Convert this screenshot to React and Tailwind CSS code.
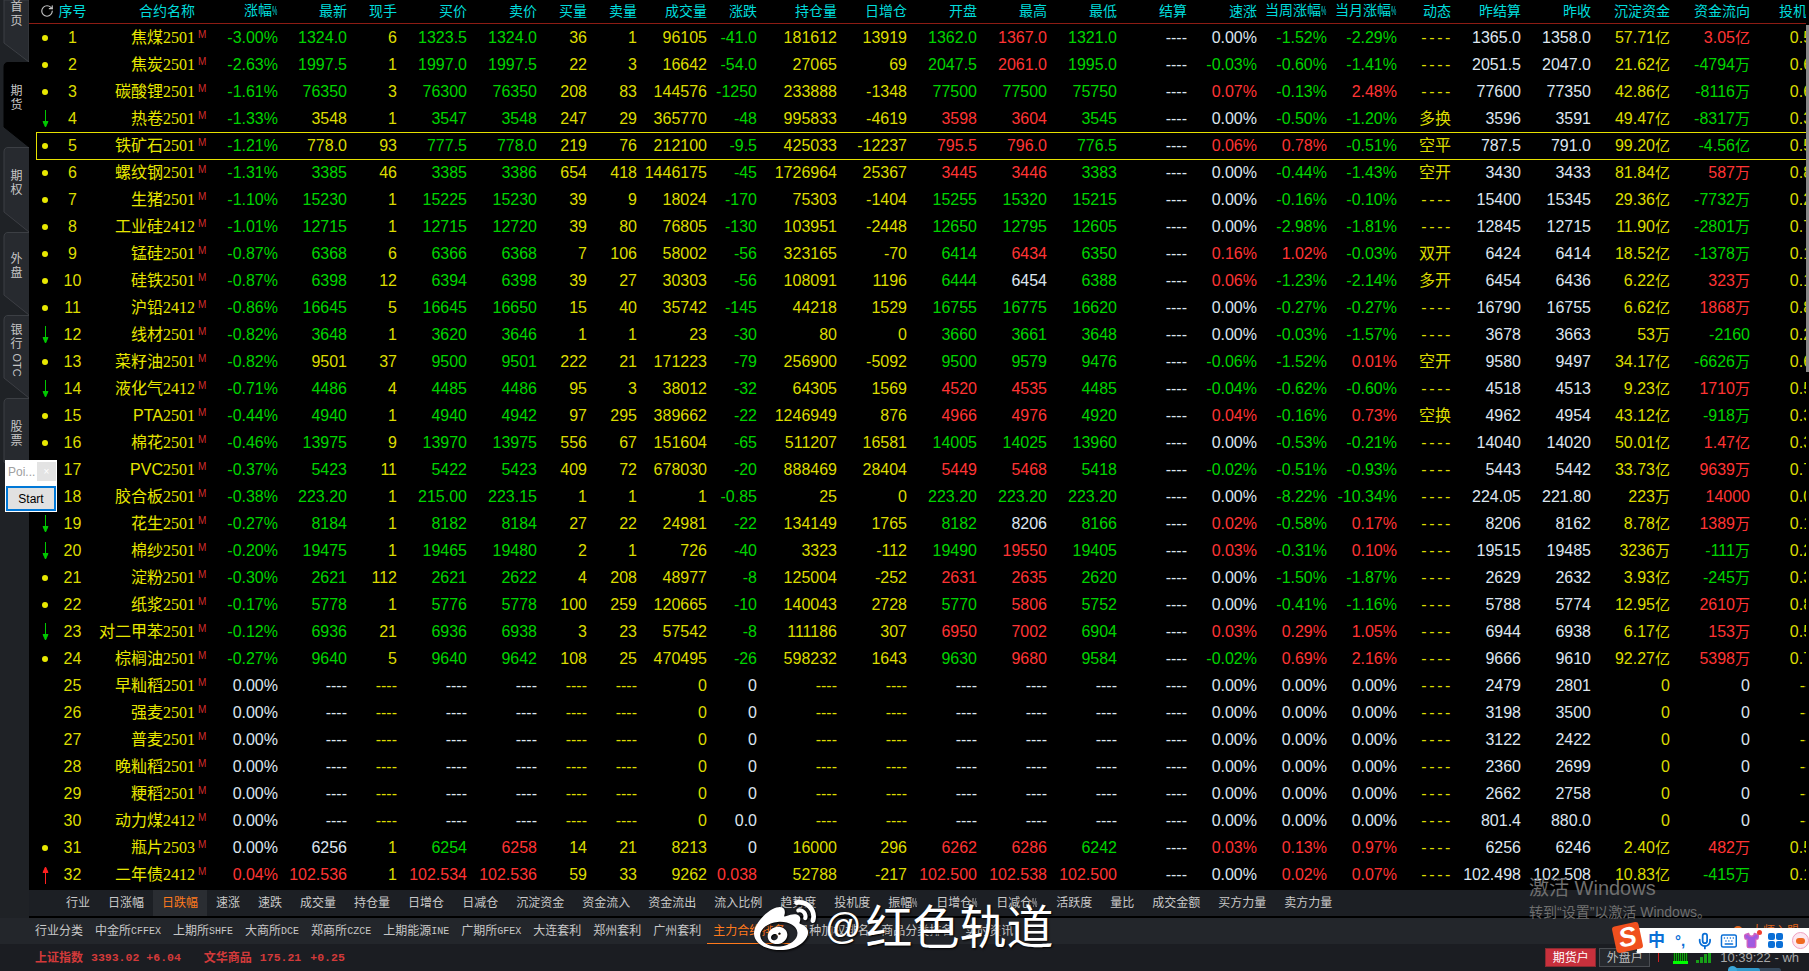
import React from "react";
import { RotateCw, Mic, Keyboard, Shirt } from "lucide-react";
import { FaWeibo } from "react-icons/fa";

// Shared column template, so the header and every row line up
const GRID =
  "grid grid-cols-[29px_29px_120px_71px_69px_50px_70px_70px_50px_50px_70px_50px_80px_70px_70px_70px_70px_70px_70px_70px_70px_54px_70px_70px_79px_80px_71px]";

const HEADERS = [
  "涨幅%", "最新", "现手", "买价", "卖价", "买量", "卖量", "成交量", "涨跌", "持仓量", "日增仓", "开盘", "最高", "最低", "结算",
  "速涨", "当周涨幅%", "当月涨幅%", "动态", "昨结算", "昨收", "沉淀资金", "资金流向", "投机度",
];

const D = "----";

// marker, name, code, pct, last, hand, bid, ask, bidVol, askVol, vol, chg, oi, dayOi, open, high, low, settle,
// speed, week, month, dyn, prevSettle, prevClose, sink, flow, spec
const ROWS = [
  ["dot","焦煤","2501","-3.00%","1324.0","6","1323.5","1324.0","36","1","96105","-41.0","181612","13919","1362.0","1367.0","1321.0",D,"0.00%","-1.52%","-2.29%",D,"1365.0","1358.0","57.71亿","3.05亿","0.53"],
  ["dot","焦炭","2501","-2.63%","1997.5","1","1997.0","1997.5","22","3","16642","-54.0","27065","69","2047.5","2061.0","1995.0",D,"-0.03%","-0.60%","-1.41%",D,"2051.5","2047.0","21.62亿","-4794万","0.63"],
  ["dot","碳酸锂","2501","-1.61%","76350","3","76300","76350","208","83","144576","-1250","233888","-1348","77500","77500","75750",D,"0.07%","-0.13%","2.48%",D,"77600","77350","42.86亿","-8116万","0.63"],
  ["down","热卷","2501","-1.33%","3548","1","3547","3548","247","29","365770","-48","995833","-4619","3598","3604","3545",D,"0.00%","-0.50%","-1.20%","多换","3596","3591","49.47亿","-8317万","0.33"],
  ["dot","铁矿石","2501","-1.21%","778.0","93","777.5","778.0","219","76","212100","-9.5","425033","-12237","795.5","796.0","776.5",D,"0.06%","0.78%","-0.51%","空平","787.5","791.0","99.20亿","-4.56亿","0.53"],
  ["dot","螺纹钢","2501","-1.31%","3385","46","3385","3386","654","418","1446175","-45","1726964","25367","3445","3446","3383",D,"0.00%","-0.44%","-1.43%","空开","3430","3433","81.84亿","587万","0.83"],
  ["dot","生猪","2501","-1.10%","15230","1","15225","15230","39","9","18024","-170","75303","-1404","15255","15320","15215",D,"0.00%","-0.16%","-0.10%",D,"15400","15345","29.36亿","-7732万","0.23"],
  ["dot","工业硅","2412","-1.01%","12715","1","12715","12720","39","80","76805","-130","103951","-2448","12650","12795","12605",D,"0.00%","-2.98%","-1.81%",D,"12845","12715","11.90亿","-2801万","0.73"],
  ["dot","锰硅","2501","-0.87%","6368","6","6366","6368","7","106","58002","-56","323165","-70","6414","6434","6350",D,"0.16%","1.02%","-0.03%","双开","6424","6414","18.52亿","-1378万","0.13"],
  ["dot","硅铁","2501","-0.87%","6398","12","6394","6398","39","27","30303","-56","108091","1196","6444","6454","6388",D,"0.06%","-1.23%","-2.14%","多开","6454","6436","6.22亿","323万","0.13"],
  ["dot","沪铅","2412","-0.86%","16645","5","16645","16650","15","40","35742","-145","44218","1529","16755","16775","16620",D,"0.00%","-0.27%","-0.27%",D,"16790","16755","6.62亿","1868万","0.83"],
  ["down","线材","2501","-0.82%","3648","1","3620","3646","1","1","23","-30","80","0","3660","3661","3648",D,"0.00%","-0.03%","-1.57%",D,"3678","3663","53万","-2160","0.23"],
  ["dot","菜籽油","2501","-0.82%","9501","37","9500","9501","222","21","171223","-79","256900","-5092","9500","9579","9476",D,"-0.06%","-1.52%","0.01%","空开","9580","9497","34.17亿","-6626万","0.63"],
  ["down","液化气","2412","-0.71%","4486","4","4485","4486","95","3","38012","-32","64305","1569","4520","4535","4485",D,"-0.04%","-0.62%","-0.60%",D,"4518","4513","9.23亿","1710万","0.53"],
  ["dot","PTA","2501","-0.44%","4940","1","4940","4942","97","295","389662","-22","1246949","876","4966","4976","4920",D,"0.04%","-0.16%","0.73%","空换","4962","4954","43.12亿","-918万","0.33"],
  ["dot","棉花","2501","-0.46%","13975","9","13970","13975","556","67","151604","-65","511207","16581","14005","14025","13960",D,"0.00%","-0.53%","-0.21%",D,"14040","14020","50.01亿","1.47亿","0.33"],
  ["dot","PVC","2501","-0.37%","5423","11","5422","5423","409","72","678030","-20","888469","28404","5449","5468","5418",D,"-0.02%","-0.51%","-0.93%",D,"5443","5442","33.73亿","9639万","0.73"],
  ["dot","胶合板","2501","-0.38%","223.20","1","215.00","223.15","1","1","1","-0.85","25","0","223.20","223.20","223.20",D,"0.00%","-8.22%","-10.34%",D,"224.05","221.80","223万","14000","0.03"],
  ["down","花生","2501","-0.27%","8184","1","8182","8184","27","22","24981","-22","134149","1765","8182","8206","8166",D,"0.02%","-0.58%","0.17%",D,"8206","8162","8.78亿","1389万","0.13"],
  ["down","棉纱","2501","-0.20%","19475","1","19465","19480","2","1","726","-40","3323","-112","19490","19550","19405",D,"0.03%","-0.31%","0.10%",D,"19515","19485","3236万","-111万","0.23"],
  ["dot","淀粉","2501","-0.30%","2621","112","2621","2622","4","208","48977","-8","125004","-252","2631","2635","2620",D,"0.00%","-1.50%","-1.87%",D,"2629","2632","3.93亿","-245万","0.33"],
  ["dot","纸浆","2501","-0.17%","5778","1","5776","5778","100","259","120665","-10","140043","2728","5770","5806","5752",D,"0.00%","-0.41%","-1.16%",D,"5788","5774","12.95亿","2610万","0.83"],
  ["down","对二甲苯","2501","-0.12%","6936","21","6936","6938","3","23","57542","-8","111186","307","6950","7002","6904",D,"0.03%","0.29%","1.05%",D,"6944","6938","6.17亿","153万","0.53"],
  ["dot","棕榈油","2501","-0.27%","9640","5","9640","9642","108","25","470495","-26","598232","1643","9630","9680","9584",D,"-0.02%","0.69%","2.16%",D,"9666","9610","92.27亿","5398万","0.73"],
  ["","早籼稻","2501","0.00%",D,D,D,D,D,D,"0","0",D,D,D,D,D,D,"0.00%","0.00%","0.00%",D,"2479","2801","0","0",D],
  ["","强麦","2501","0.00%",D,D,D,D,D,D,"0","0",D,D,D,D,D,D,"0.00%","0.00%","0.00%",D,"3198","3500","0","0",D],
  ["","普麦","2501","0.00%",D,D,D,D,D,D,"0","0",D,D,D,D,D,D,"0.00%","0.00%","0.00%",D,"3122","2422","0","0",D],
  ["","晚籼稻","2501","0.00%",D,D,D,D,D,D,"0","0",D,D,D,D,D,D,"0.00%","0.00%","0.00%",D,"2360","2699","0","0",D],
  ["","粳稻","2501","0.00%",D,D,D,D,D,D,"0","0",D,D,D,D,D,D,"0.00%","0.00%","0.00%",D,"2662","2758","0","0",D],
  ["","动力煤","2412","0.00%",D,D,D,D,D,D,"0","0.0",D,D,D,D,D,D,"0.00%","0.00%","0.00%",D,"801.4","880.0","0","0",D],
  ["dot","瓶片","2503","0.00%","6256","1","6254","6258","14","21","8213","0","16000","296","6262","6286","6242",D,"0.03%","0.13%","0.97%",D,"6256","6246","2.40亿","482万","0.53"],
  ["up","二年债","2412","0.04%","102.536","1","102.534","102.536","59","33","9262","0.038","52788","-217","102.500","102.538","102.500",D,"0.00%","0.02%","0.07%",D,"102.498","102.508","10.83亿","-415万","0.13"],
];

const COLORS = {
  g: "text-[#00d400]",
  r: "text-[#ff3434]",
  w: "text-[#dde6f0]",
  y: "text-[#dcdc00]",
};

// Last prices that are flashing yellow in the picture
const FLASH = new Set([4, 5, 13]);

// Price colour comes from comparing with the previous settlement
const priceColor = (value, prev) => {
  if (value === D) return COLORS.w;
  const a = parseFloat(value);
  const b = parseFloat(prev);
  return a > b ? COLORS.r : a < b ? COLORS.g : COLORS.w;
};

const signColor = (value) => {
  const n = parseFloat(value);
  return n > 0 ? COLORS.r : n < 0 ? COLORS.g : COLORS.w;
};

const rowCells = (r, index) => {
  const prev = r[22];
  const last = FLASH.has(index + 1) ? COLORS.y : priceColor(r[4], prev);
  return [
    [r[3], signColor(r[3])],
    [r[4], last],
    [r[5], COLORS.y],
    [r[6], priceColor(r[6], prev)],
    [r[7], priceColor(r[7], prev)],
    [r[8], COLORS.y],
    [r[9], COLORS.y],
    [r[10], COLORS.y],
    [r[11], signColor(r[11])],
    [r[12], COLORS.y],
    [r[13], COLORS.y],
    [r[14], priceColor(r[14], prev)],
    [r[15], priceColor(r[15], prev)],
    [r[16], priceColor(r[16], prev)],
    [r[17], COLORS.w],
    [r[18], signColor(r[18])],
    [r[19], signColor(r[19])],
    [r[20], signColor(r[20])],
    [r[21], COLORS.y, "dyn"],
    [r[22], COLORS.w],
    [r[23], COLORS.w],
    [r[24], COLORS.y],
    [r[25], signColor(r[25])],
    [r[26], COLORS.y],
  ];
};

const TAB_ROW_ONE = ["行业", "日涨幅", "日跌幅", "速涨", "速跌", "成交量", "持仓量", "日增仓", "日减仓", "沉淀资金", "资金流入", "资金流出", "流入比例", "趋势度", "投机度", "振幅%", "日增仓%", "日减仓%", "活跃度", "量比", "成交金额", "买方力量", "卖方力量"];

const TAB_ROW_TWO = [
  ["行业分类"], ["中金所", "CFFEX"], ["上期所", "SHFE"], ["大商所", "DCE"], ["郑商所", "CZCE"], ["上期能源", "INE"], ["广期所", "GFEX"],
  ["大连套利"], ["郑州套利"], ["广州套利"], ["主力合约排名"], ["品种加权排名"], ["商品分类排名"], ["实时资讯"],
];

// Labels end in a tall, squeezed percent sign
function Label({ text }) {
  if (!text.endsWith("%")) return text;
  return (
    <>
      {text.slice(0, -1)}
      <span className="inline-block w-[6px] origin-left scale-x-[0.5] text-left text-[12px]">%</span>
    </>
  );
}

// Splits 亿 / 万 off so it can sit in the CJK size
function Value({ text }) {
  const m = text.match(/^(.*)(亿|万)$/);
  if (!m) return text;
  return (
    <>
      {m[1]}
      <span className="text-[15px]">{m[2]}</span>
    </>
  );
}

function Marker({ type }) {
  if (type === "dot") return <span className="ml-[13px] block h-[6px] w-[6px] rounded-full bg-[#e8e800]" />;
  if (type === "down")
    return (
      <svg className="ml-[13px] block" width="7" height="18" viewBox="0 0 7 18">
        <path d="M3.5 0V16M1 11.5L3.5 17L6 11.5Z" stroke="#00c800" fill="#00c800" strokeWidth="1" />
      </svg>
    );
  if (type === "up")
    return (
      <svg className="ml-[13px] block" width="7" height="18" viewBox="0 0 7 18">
        <path d="M3.5 18V2M1 6.5L3.5 1L6 6.5Z" stroke="#ff2020" fill="#ff2020" strokeWidth="1" />
      </svg>
    );
  return <span />;
}

function TableRow({ row, index }) {
  return (
    <div className={`${GRID} relative h-[27px] items-center text-[16px] leading-[27px]`}>
      <Marker type={row[0]} />
      <span className="text-center text-[#dcdc00]">{index + 1}</span>
      <span className="flex items-center justify-end whitespace-nowrap text-[#e6e600]">
        {row[1]}
        <span className="font-['Liberation_Serif',serif] text-[16px]">{row[2]}</span>
        <span className="ml-[3px] w-[9px] -translate-y-[3px] text-[10px] leading-none text-[#d22c2c]">M</span>
      </span>
      {rowCells(row, index).map(([value, color, kind], i) => (
        <span
          key={i}
          className={`text-right whitespace-nowrap ${color} ${kind === "dyn" && value === D ? "tracking-[2.6px] [margin-right:-2px]" : ""}`}
        >
          <Value text={value} />
        </span>
      ))}
      {index === 4 && <span className="absolute -bottom-px left-[7px] right-0 top-0 border border-r-0 border-[#e6e000]" />}
    </div>
  );
}

function SideTab({ label, active, h }) {
  const left = h - 20;
  return (
    <div className={`relative shrink-0 ${h === 85 ? "h-[85px]" : h === 83 ? "h-[83px]" : "h-[84px]"}`}>
      <svg className="absolute inset-0" width="29" height={h} viewBox={`0 0 29 ${h}`}>
        <path
          d={`M29 0.5H8Q4 0.5 4 5V${left}L29 ${h}`}
          fill={active ? "#000" : "#272a2f"}
          stroke={active ? "#000" : "#3c3f44"}
        />
      </svg>
      <div className="relative flex w-[29px] flex-col items-center pl-[4px] pt-[22px] text-[12px] leading-[14px] text-[#c6c6c6]">
        {label}
      </div>
    </div>
  );
}

function SideBar() {
  return (
    <div className="flex h-[918px] w-[29px] shrink-0 flex-col overflow-hidden bg-[#1f2226]">
      <div className="relative h-[62px] shrink-0">
        <svg className="absolute inset-0" width="29" height="62" viewBox="0 0 29 62">
          <path d="M4 0V43L29 62V0Z" fill="#272a2f" stroke="#3c3f44" />
        </svg>
        <div className="relative flex w-[29px] flex-col items-center pl-[4px] text-[12px] leading-[14px] text-[#c6c6c6]">
          <span>首</span>
          <span>页</span>
        </div>
      </div>
      <SideTab h={85} active label={<><span>期</span><span>货</span></>} />
      <SideTab h={85} label={<><span>期</span><span>权</span></>} />
      <SideTab h={83} label={<><span className="-mt-[2px]">外</span><span>盘</span></>} />
      <SideTab h={83} label={<><span className="-mt-[14px]">银</span><span>行</span><span className="mt-[9px] rotate-90 text-[11px] leading-[10px]">OTC</span></>} />
      <SideTab h={84} label={<><span>股</span><span>票</span></>} />
    </div>
  );
}

function Table() {
  return (
    <div className="h-[890px] w-[1777px] overflow-hidden bg-black">
      <div className={`${GRID} h-[24px] items-center border-b border-[#8c1c14] pb-[3px] text-[14px] leading-[20px] text-[#00dcdc]`}>
        <RotateCw size={14} className="ml-[11px] text-[#c4c4c4]" />
        <span className="text-center">序号</span>
        <span className="pr-[12px] text-right">合约名称</span>
        {HEADERS.map((h) => (
          <span key={h} className="text-right whitespace-nowrap">
            <Label text={h} />
          </span>
        ))}
      </div>
      {ROWS.map((row, i) => (
        <TableRow key={i} row={row} index={i} />
      ))}
    </div>
  );
}

function TopTabs() {
  return (
    <div className="flex h-[26px] items-center bg-[#1c1f24] pl-[28px] text-[12px] text-[#c8c8c8]">
      {TAB_ROW_ONE.map((t) => (
        <span
          key={t}
          className={`flex h-[26px] items-center whitespace-nowrap px-[9px] ${t === "日跌幅" ? "bg-[#2a2d32] text-[#ff7a1c]" : ""}`}
        >
          <Label text={t} />
        </span>
      ))}
    </div>
  );
}

function ExchangeTabs() {
  return (
    <div className="flex h-[26px] items-center gap-[12px] bg-[#23262b] pl-[35px] text-[12px] text-[#c8c8c8]">
      {TAB_ROW_TWO.map(([cn, en]) => (
        <span
          key={cn}
          className={`flex h-[26px] items-center whitespace-nowrap ${cn === "主力合约排名" ? "-mx-[6px] border-b border-[#ff7a1c] px-[6px] text-[#ff7a1c]" : ""}`}
        >
          {cn}
          {en && <span className="font-['Liberation_Mono',monospace] text-[10px]">{en}</span>}
        </span>
      ))}
      <span className="ml-auto flex items-center gap-[8px] pr-[10px] text-[#e0651c]">
        <span className="h-[10px] w-[10px] rounded-full border-2 border-[#e0651c]" />
        <span>大师入盟</span>
      </span>
    </div>
  );
}

function StatusBar() {
  return (
    <div className="flex h-[27px] items-center bg-[#1b1d22] pl-[35px] pr-[10px] text-[12px] text-[#d33a3a]">
      <span className="font-semibold">上证指数</span>
      <span className="ml-[8px] font-['Liberation_Mono',monospace] text-[11.5px] font-bold">3393.02</span>
      <span className="ml-[7px] font-['Liberation_Mono',monospace] text-[11.5px] font-bold">+6.04</span>
      <span className="ml-[23px] font-semibold">文华商品</span>
      <span className="ml-[8px] font-['Liberation_Mono',monospace] text-[11.5px] font-bold">175.21</span>
      <span className="ml-[9px] font-['Liberation_Mono',monospace] text-[11.5px] font-bold">+0.25</span>
      <div className="ml-auto flex h-full items-center">
        <span className="flex h-[19px] w-[51px] items-center justify-center border border-[#8a2a30] bg-[#c8303c] text-white">期货户</span>
        <span className="ml-[3px] flex h-[19px] w-[51px] items-center justify-center border border-[#4a4d52] bg-[#26292e] text-[#bdbdbd]">外盘户</span>
        <span className="ml-[8px] h-[9px] w-px bg-[#d02020]" />
        <span className="ml-[14px] flex h-[13px] w-[15px] flex-col justify-end bg-[repeating-linear-gradient(90deg,#0a3a0a_0_1px,#10a010_1px_2px)]">
          <span className="block h-[3px] bg-[#00ff00]" />
        </span>
        <span className="ml-[8px] flex h-[11px] items-end gap-px">
          <span className="h-[3px] w-[3px] bg-[#18a018]" />
          <span className="h-[6px] w-[3px] bg-[#18a018]" />
          <span className="h-[9px] w-[3px] bg-[#18a018]" />
          <span className="h-[11px] w-[3px] bg-[#18a018]" />
        </span>
        <span className="relative ml-[9px] font-['Liberation_Sans',sans-serif] text-[13px] whitespace-nowrap text-[#a8a8a8]">
          10:39:22 - wh
          <span className="absolute -bottom-[6px] left-[8px] h-[5px] w-[53px] rounded-full bg-[#33475a]">
            <span className="absolute left-0 top-0 h-[5px] w-[32px] rounded-full bg-[#2f97c8]" />
            <span className="absolute -top-[2px] left-0 h-[9px] w-[9px] rounded-full bg-[#3aa6d8]" />
          </span>
        </span>
      </div>
    </div>
  );
}

// The little "Point" helper window floating over the sidebar
function StartWidget() {
  return (
    <div className="absolute left-[5px] top-[460px] h-[52px] w-[52px] bg-white">
      <div className="flex h-[26px] items-start pt-[2px]">
        <span className="w-[32px] pl-[3px] text-[12px] leading-[20px] text-[#a0a0a0]">Poi...</span>
        <span className="flex h-[19px] w-[19px] items-center justify-center bg-[#e3e3e3] text-[10px] text-white">×</span>
      </div>
      <div className="mx-px flex h-[25px] items-center justify-center border-2 border-[#0078d7] bg-[#e1e1e1] text-[12px] text-black">Start</div>
    </div>
  );
}

function Activation() {
  return (
    <div className="pointer-events-none absolute left-[1529px] top-[876px] whitespace-nowrap text-[#6f6f6f]">
      <div className="text-[20px] leading-[24px]">激活 Windows</div>
      <div className="mt-[2px] text-[14px] leading-[20px]">转到“设置”以激活 Windows。</div>
    </div>
  );
}

function Watermark() {
  return (
    <div className="absolute left-[754px] top-[900px] flex h-[54px] items-center text-white [text-shadow:1px_1px_2px_#000]">
      <FaWeibo size={62} className="drop-shadow-[1px_1px_1px_#000]" />
      <span className="ml-[9px] text-[36px] leading-none">@</span>
      <span className="ml-[4px] text-[47px] leading-none">红色轨道</span>
    </div>
  );
}

function ImeBar() {
  return (
    <div className="absolute left-[1637px] top-[928px] flex h-[25px] w-[172px] items-center bg-white text-[#0a6fd6]">
      <span className="ml-[11px] text-[17px] font-bold leading-none">中</span>
      <span className="ml-[10px] w-[12px] text-[15px] font-bold leading-none">°,</span>
      <Mic size={18} strokeWidth={2.4} className="ml-[9px]" />
      <Keyboard size={18} strokeWidth={2} className="ml-[6px]" />
      <span className="relative ml-[6px]">
        <Shirt size={17} className="fill-[#a05ae0] text-[#d060c0]" />
        <span className="absolute -right-[2px] -top-[2px] h-[5px] w-[5px] rounded-full bg-[#f04030]" />
      </span>
      <span className="ml-[8px] grid grid-cols-2 gap-px">
        <span className="h-[7px] w-[7px] rounded-[2px] bg-[#0a6fd6]" />
        <span className="h-[7px] w-[7px] rounded-[2px] bg-[#0a6fd6]" />
        <span className="h-[7px] w-[7px] rounded-[2px] bg-[#0a6fd6]" />
        <span className="h-[7px] w-[7px] rounded-[2px] bg-[#0a6fd6]" />
      </span>
      <span className="ml-[9px] flex h-[17px] w-[17px] items-center justify-center rounded-full border border-[#f0a0c0] bg-[#fde8f0]">
        <span className="h-[6px] w-[9px] rounded-[3px] bg-[#f06a20]" />
      </span>
    </div>
  );
}

function SogouLogo() {
  return (
    <div className="absolute left-[1614px] top-[924px] flex h-[27px] w-[27px] -rotate-12 items-center justify-center rounded-[3px] bg-[#f0501e] font-['Liberation_Sans',sans-serif] text-[27px] font-bold italic leading-none text-white">
      S
    </div>
  );
}

export default function App() {
  return (
    <div className="relative h-screen w-screen overflow-hidden bg-black font-['Liberation_Sans','Noto_Sans_CJK_SC',sans-serif]">
      <div className="flex h-[918px]">
        <SideBar />
        <div className="min-w-0 flex-1">
          <div className="flex">
            <Table />
            <div className="w-[3px] shrink-0 pt-[25px]">
              <div className="h-[347px] bg-[#888888]" />
            </div>
          </div>
          <TopTabs />
        </div>
      </div>
      <ExchangeTabs />
      <StatusBar />
      <StartWidget />
      <Activation />
      <ImeBar />
      <SogouLogo />
      <Watermark />
    </div>
  );
}
